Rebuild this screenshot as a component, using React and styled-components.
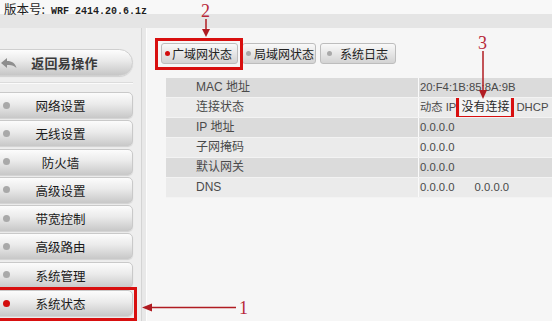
import React from 'react';
import styled, { createGlobalStyle, css } from 'styled-components';

const GlobalStyle = createGlobalStyle`
  html, body {
    margin: 0;
    padding: 0;
    background: #f6f6f6;
  }
  body {
    width: 552px;
    height: 321px;
    overflow: hidden;
    font-family: "Noto Sans CJK SC", sans-serif;
  }
`;

const CJK = '"Noto Sans CJK SC", sans-serif';
const LATIN = '"Liberation Sans", "Noto Sans CJK SC", sans-serif';
const RED = '#d80f0f';

// red hand-drawn marker box laid over a marked element
const markBox = (t, r, b, l) => css`
  position: relative;
  &::after {
    content: '';
    position: absolute;
    top: ${t}px;
    right: ${r}px;
    bottom: ${b}px;
    left: ${l}px;
    border: 3px solid ${RED};
    pointer-events: none;
  }
`;

const Page = styled.div`
  position: relative;
  width: 552px;
  height: 321px;
  overflow: hidden;
  display: grid;
  grid-template-rows: 28px 1fr;
`;

const Header = styled.header`
  background: linear-gradient(#f8f8f8 0 14px, #e5e5e5 14px 28px);
  padding: 0 0 0 4px;
  font-family: ${CJK};
  font-size: 12.5px;
  line-height: 18px;
  color: #1e1e1e;
  white-space: nowrap;
`;

const Version = styled.span`
  margin-left: 6px;
  font-family: "Liberation Mono", monospace;
  font-size: 10px;
  font-weight: bold;
`;

const Body = styled.div`
  display: grid;
  grid-template-columns: 141px 6px 1fr;
  min-height: 0;
`;

const Sidebar = styled.nav`
  background: #eeeeee;
  padding-top: 21px;
  display: flex;
  flex-direction: column;
  overflow: hidden;
`;

const BackButton = styled.div`
  margin-left: -14px;
  width: 147px;
  height: 27px;
  box-sizing: border-box;
  border: 1px solid #cfcfcf;
  border-radius: 14px;
  background: linear-gradient(#fdfdfd, #e9e9e9 45%, #c6c6c6);
  box-shadow: 0 1px 1px rgba(0, 0, 0, 0.12);
  display: grid;
  grid-template-columns: 40px 1fr 30px;
  align-items: center;
  font-family: ${CJK};
  font-size: 13px;
  font-weight: bold;
  color: #3a3a3a;
`;

const BackIcon = styled.svg`
  justify-self: end;
  margin-right: 10px;
`;

const BackLabel = styled.span`
  text-align: center;
  letter-spacing: 0.3px;
`;

const Separator = styled.div`
  margin: 6px 8px 8px 0;
  height: 1px;
  background: #dcdcdc;
  border-bottom: 1px solid #fbfbfb;
`;

const Menu = styled.div`
  display: flex;
  flex-direction: column;
  gap: 2.3px;
`;

const MenuButton = styled.div`
  margin-left: -12px;
  width: 145px;
  height: 26px;
  box-sizing: border-box;
  border: 1px solid #c9c9c9;
  border-radius: 0 5px 5px 0;
  background: linear-gradient(#fcfcfc, #ebebeb 45%, #cacaca);
  box-shadow: 0 1px 1px rgba(0, 0, 0, 0.12);
  display: grid;
  grid-template-columns: 36px 1fr 36px;
  align-items: center;
  font-family: ${CJK};
  font-size: 12.5px;
  color: #1a1a1a;
  ${p => p.$marked && markBox(-4, -5, -6, -4)}
`;

const Dot = styled.span`
  width: ${p => p.$size || 7}px;
  height: ${p => p.$size || 7}px;
  border-radius: 50%;
  background: ${p => (p.$active ? '#d30d0d' : '#a9a9a9')};
  flex: none;
`;

const MenuDot = styled(Dot)`
  margin-left: 14px;
`;

const MenuLabel = styled.span`
  text-align: center;
  padding-top: 1px;
`;

const Divider = styled.div`
  background: linear-gradient(90deg, #d4d4d4 0 1px, #e8e8e8 1px 5px, #fdfdfd 5px);
`;

const Main = styled.main`
  background: #f6f6f6;
  padding: 15px 0 0 14px;
  overflow: hidden;
`;

const Tabs = styled.div`
  display: flex;
  gap: 4px;
`;

const Tab = styled.div`
  width: ${p => p.$width}px;
  height: 21px;
  box-sizing: border-box;
  padding-left: ${p => p.$pad}px;
  border: 1px solid #bdbdbd;
  border-radius: 3px;
  background: linear-gradient(#f9f9f9, #e6e6e6 50%, #d3d3d3);
  display: flex;
  align-items: center;
  gap: ${p => p.$gap}px;
  font-family: ${CJK};
  font-size: 12px;
  color: #222;
  white-space: nowrap;
  ${p => p.$marked && markBox(-6, -6, -7, -7)}
`;

const Table = styled.div`
  margin: 14px 0 0 5px;
  width: 430px;
`;

const Row = styled.div`
  display: grid;
  grid-template-columns: 252px 1fr;
  height: 20px;
  box-sizing: border-box;
  border-bottom: 1px solid #f3f3f3;
  background: ${p => (p.$odd ? '#dbdbdb' : '#ebebeb')};
  font-family: ${LATIN};
  font-size: 12px;
  line-height: 19px;
  color: #4a4a4a;
  white-space: nowrap;
`;

const Label = styled.div`
  padding-left: 30px;
`;

const Value = styled.div`
  border-left: 1px solid #fafafa;
  padding-left: 1px;
  font-size: 11.3px;
  overflow: hidden;
`;

const Gap = styled.span`
  display: inline-block;
  width: ${p => p.$w}px;
`;

const Marked = styled.span`
  display: inline-block;
  height: 20px;
  line-height: 20px;
  margin-top: -1px;
  padding: 0 1px;
  font-size: 12px;
  background: #f5f5f5;
  color: #2a2a2a;
  vertical-align: top;
  ${markBox(-3, -4, -2, -4)}
`;

const Overlay = styled.svg`
  position: absolute;
  inset: 0;
  pointer-events: none;
`;

const Num = styled.span`
  position: absolute;
  left: ${p => p.$x}px;
  top: ${p => p.$y}px;
  font-family: "Liberation Serif", serif;
  font-size: 18px;
  line-height: 1;
  color: #b8283a;
`;

const menu = ['网络设置', '无线设置', '防火墙', '高级设置', '带宽控制', '高级路由', '系统管理', '系统状态'];

const rows = [
  ['MAC 地址', '20:F4:1B:85:8A:9B'],
  ['连接状态', null],
  ['IP 地址', '0.0.0.0'],
  ['子网掩码', '0.0.0.0'],
  ['默认网关', '0.0.0.0'],
  ['DNS', 'dns'],
];

export default function App() {
  return (
    <>
      <GlobalStyle />
      <Page>
        <Header>
          版本号:<Version>WRF 2414.20.6.1z</Version>
        </Header>
        <Body>
          <Sidebar>
            <BackButton>
              <BackIcon width="16" height="12" viewBox="0 0 16 12">
                <path d="M6 1 L0 6 L6 11 L6 8 C10 7.5 13 8.5 15.5 11 C14.5 6.5 11 4 6 4 Z" fill="#8e8e8e" />
              </BackIcon>
              <BackLabel>返回易操作</BackLabel>
            </BackButton>
            <Separator />
            <Menu>
              {menu.map((item, i) => {
                const active = i === menu.length - 1;
                return (
                  <MenuButton key={item} $marked={active}>
                    <MenuDot $active={active} />
                    <MenuLabel>{item}</MenuLabel>
                  </MenuButton>
                );
              })}
            </Menu>
          </Sidebar>
          <Divider />
          <Main>
            <Tabs>
              <Tab $width={77} $pad={3} $gap={2} $marked>
                <Dot $size={5} $active />
                广域网状态
              </Tab>
              <Tab $width={74} $pad={3} $gap={3}>
                <Dot $size={5} />
                局域网状态
              </Tab>
              <Tab $width={76} $pad={6} $gap={8}>
                <Dot $size={5} />
                系统日志
              </Tab>
            </Tabs>
            <Table>
              {rows.map(([label, value], i) => (
                <Row key={label} $odd={i % 2 === 0}>
                  <Label>{label}</Label>
                  <Value>
                    {value === null ? (
                      <>
                        动态 IP<Gap $w={4} />
                        <Marked>没有连接</Marked>
                        <Gap $w={6} />
                        DHCP
                      </>
                    ) : value === 'dns' ? (
                      <>
                        0.0.0.0<Gap $w={20} />0.0.0.0
                      </>
                    ) : (
                      value
                    )}
                  </Value>
                </Row>
              ))}
            </Table>
          </Main>
        </Body>

        <Overlay width="552" height="321" viewBox="0 0 552 321">
          <g stroke="#b01c22" strokeWidth="1.5" fill="none">
            <line x1="206" y1="19" x2="206" y2="31" />
            <line x1="483" y1="51" x2="483" y2="92" />
            <line x1="236" y1="307.5" x2="150" y2="307.5" />
          </g>
          <g fill="#b01c22">
            <polygon points="202,29 210,29 206,37" />
            <polygon points="479,90 487,90 483,99" />
            <polygon points="152,303.5 152,311.5 142,307.5" />
          </g>
        </Overlay>
        <Num $x={201} $y={2}>2</Num>
        <Num $x={478} $y={34}>3</Num>
        <Num $x={239} $y={299}>1</Num>
      </Page>
    </>
  );
}
